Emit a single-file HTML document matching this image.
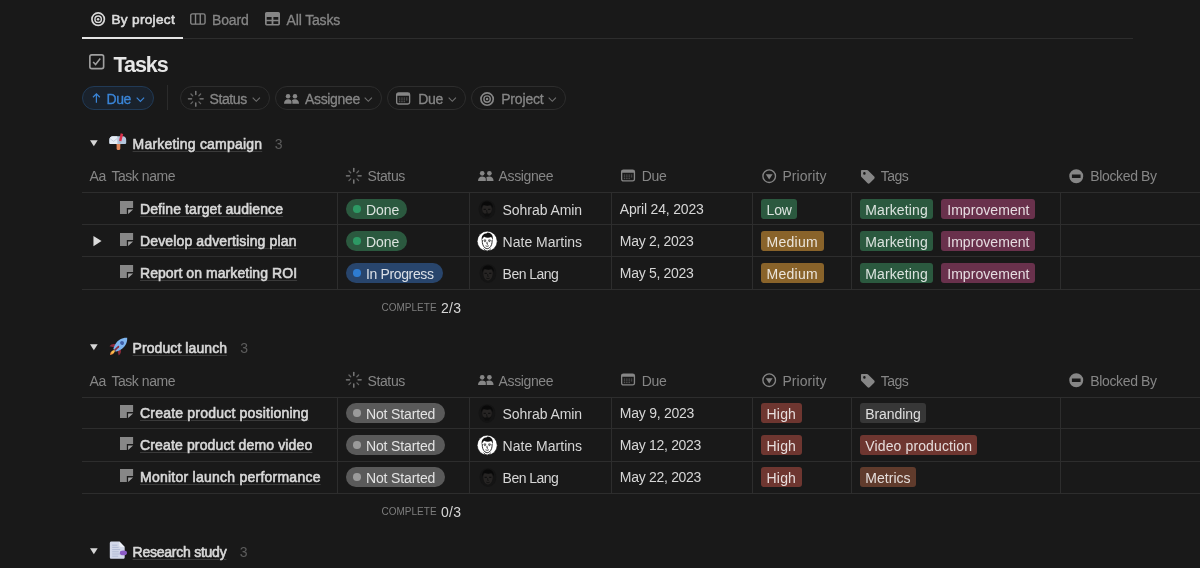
<!DOCTYPE html>
<html lang="en"><head><meta charset="utf-8"><title>Tasks</title>
<style>

html,body{margin:0;padding:0;background:#191919;}
body{width:1200px;height:568px;overflow:hidden;position:relative;font-family:"Liberation Sans",sans-serif;color:#d4d4d4;-webkit-font-smoothing:antialiased;}
.row{position:absolute;left:0;width:1200px;}
.app{position:absolute;left:0;top:0;width:1200px;height:568px;will-change:transform;}
.t{position:absolute;top:0;white-space:pre;line-height:inherit;}
.ic{position:absolute;display:block;overflow:visible;}
.vl{position:absolute;width:1px;background:#2d2d2d;}
.hl{position:absolute;height:1px;background:#2d2d2d;}
.tag{position:absolute;border-radius:3px;}
.pill{position:absolute;box-sizing:border-box;border:1px solid #2d2d2d;border-radius:12px;}
.u{text-decoration:underline;text-decoration-color:#3a3a3a;text-decoration-thickness:1px;text-underline-offset:2px;}
.dot{position:absolute;border-radius:50%;}
.m{-webkit-text-stroke:0.3px currentColor;}
.sb{-webkit-text-stroke:0.6px currentColor;}

</style></head>
<body>
<div class="app">
<div class="hl" style="left:82px;top:38px;width:1051px"></div>
<div class="hl" style="left:82px;top:37px;width:101px;height:2px;background:#e4e4e4"></div>
<div class="row tabs" style="top:1.00px;height:38px;line-height:38px"><svg class="ic" style="left:90.60px;top:10.90px" width="14.3" height="14.3" viewBox="0 0 16 16" ><circle cx="8" cy="8" r="6.950" fill="none" stroke="#d8d8d8" stroke-width="1.9"/><circle cx="8" cy="8" r="3.600" fill="none" stroke="#d8d8d8" stroke-width="1.6"/><circle cx="8" cy="8" r="1.400" fill="#d8d8d8"/></svg><span class="t sb" style="left:111.50px;font-size:13.6px;font-weight:400;color:#dcdcdc;letter-spacing:0.305px">By project</span><svg class="ic" style="left:190.20px;top:11.80px" width="15.8" height="12" viewBox="0 0 16 12" ><rect x="0.75" y="0.75" width="14.5" height="10.5" rx="1.8" fill="none" stroke="#868686" stroke-width="1.4"/><path d="M5.6 1v10M10.4 1v10" stroke="#868686" stroke-width="1.4"/></svg><span class="t m" style="left:212.10px;font-size:14px;font-weight:400;color:#868686;letter-spacing:-0.172px">Board</span><svg class="ic" style="left:265.00px;top:11.10px" width="15" height="13.4" viewBox="0 0 15 13.4" ><path fill-rule="evenodd" fill="#868686" d="M1.600 0h11.800A1.600 1.600 0 0 1 15 1.600v10.200a1.600 1.600 0 0 1-1.600 1.600H1.600A1.600 1.600 0 0 1 0 11.800V1.600A1.600 1.600 0 0 1 1.600 0zM1.700 4.900h4.900v2.900H1.700zM8.400 4.900h4.900v2.900H8.400zM1.700 9.200h4.900v2.800H1.700zM8.400 9.200h4.900v2.800H8.400z"/></svg><span class="t m" style="left:286.60px;font-size:14px;font-weight:400;color:#868686;letter-spacing:-0.165px">All Tasks</span></div>
<div class="row title" style="top:49.80px;height:30px;line-height:30px"><svg class="ic" style="left:89.00px;top:4.00px" width="15.5" height="15.5" viewBox="0 0 16 16" ><rect x="0.9" y="0.9" width="14.2" height="14.2" rx="2" fill="none" stroke="#a0a0a0" stroke-width="1.7"/><path d="M4.300 8.200l2.500 2.700l4.800-6.200" fill="none" stroke="#a0a0a0" stroke-width="1.6"/></svg><span class="t " style="left:113.40px;font-size:21.5px;font-weight:700;color:#e6e6e6;letter-spacing:-0.995px">Tasks</span></div>
<div class="row filters" style="top:86.00px;height:24px;line-height:24px"><div class="pill" style="left:82px;top:0;width:72px;height:24px;border-color:#213a56;background:#1a222c"></div><svg class="ic" style="left:92.00px;top:7.00px" width="8.8" height="10.3" viewBox="0 0 10 12" ><path d="M5 11.5V1.2M1 5l4-4l4 4" fill="none" stroke="#3a85d8" stroke-width="1.4"/></svg><span class="t m" style="left:106.50px;font-size:14px;font-weight:400;color:#3a85d8;top:1px;letter-spacing:-0.429px">Due</span><svg class="ic" style="left:135.50px;top:10.70px" width="8.8" height="5.3" viewBox="0 0 10 6" ><path d="M0.8 0.8l4.200 4.200l4.200-4.200" fill="none" stroke="#3a85d8" stroke-width="1.3"/></svg><div class="vl" style="left:167px;top:-1px;height:25px;background:#2b2b2b"></div><div class="pill" style="left:180px;top:0;width:89.5px;height:24px"></div><svg class="ic" style="left:188.00px;top:5.10px" width="15.6" height="15.6" viewBox="0 0 16 16" ><path d="M8.00 3.70L8.00 0.40" stroke="#868686" stroke-opacity="1" stroke-width="1.35" stroke-linecap="round" fill="none"/><path d="M11.18 4.82L12.95 3.05" stroke="#868686" stroke-opacity="0.7" stroke-width="1.35" stroke-linecap="round" fill="none"/><path d="M12.30 8.00L15.60 8.00" stroke="#868686" stroke-opacity="1" stroke-width="1.35" stroke-linecap="round" fill="none"/><path d="M11.18 11.18L12.95 12.95" stroke="#868686" stroke-opacity="0.7" stroke-width="1.35" stroke-linecap="round" fill="none"/><path d="M8.00 12.30L8.00 15.60" stroke="#868686" stroke-opacity="1" stroke-width="1.35" stroke-linecap="round" fill="none"/><path d="M4.82 11.18L3.05 12.95" stroke="#868686" stroke-opacity="0.7" stroke-width="1.35" stroke-linecap="round" fill="none"/><path d="M3.70 8.00L0.40 8.00" stroke="#868686" stroke-opacity="1" stroke-width="1.35" stroke-linecap="round" fill="none"/><path d="M4.82 4.82L3.05 3.05" stroke="#868686" stroke-opacity="0.7" stroke-width="1.35" stroke-linecap="round" fill="none"/></svg><span class="t m" style="left:209.50px;font-size:14px;font-weight:400;color:#868686;top:1px;letter-spacing:-0.384px">Status</span><svg class="ic" style="left:251.50px;top:10.60px" width="8.6" height="5.2" viewBox="0 0 10 6" ><path d="M0.8 0.8l4.200 4.200l4.200-4.200" fill="none" stroke="#6f6f6f" stroke-width="1.3"/></svg><div class="pill" style="left:275px;top:0;width:107px;height:24px"></div><svg class="ic" style="left:283.80px;top:7.70px" width="15" height="9.8" viewBox="0 0 16 10.4" ><circle cx="4.3" cy="2.4" r="2.4" fill="#868686"/><circle cx="11.7" cy="2.4" r="2.4" fill="#868686"/><path fill="#868686" d="M0 10.400c0-3.200 1.700-4.800 4.300-4.800c1.700 0 3 .7 3.700 2v2.800z"/><path fill="#868686" d="M8.400 6.600c.8-.6 1.900-1 3.300-1c2.600 0 4.300 1.600 4.300 4.800H8.900V8.200c0-.6-.2-1.100-.5-1.600z"/></svg><span class="t m" style="left:305.00px;font-size:14px;font-weight:400;color:#868686;top:1px;letter-spacing:-0.337px">Assignee</span><svg class="ic" style="left:364.40px;top:10.60px" width="8.6" height="5.2" viewBox="0 0 10 6" ><path d="M0.8 0.8l4.200 4.200l4.200-4.200" fill="none" stroke="#6f6f6f" stroke-width="1.3"/></svg><div class="pill" style="left:387px;top:0;width:78.5px;height:24px"></div><svg class="ic" style="left:396.20px;top:6.20px" width="14.3" height="13" viewBox="0 0 15 13" ><rect x="0.7" y="0.7" width="13.6" height="11.6" rx="1.9" fill="none" stroke="#868686" stroke-width="1.4"/><path d="M0.7 3.600V2.600a1.900 1.900 0 0 1 1.900-1.900h9.800a1.900 1.900 0 0 1 1.900 1.900v1z" fill="#868686"/><rect x="3.00" y="5.50" width="1.5" height="1.1" fill="#868686" fill-opacity="0.6"/><rect x="5.50" y="5.50" width="1.5" height="1.1" fill="#868686" fill-opacity="0.6"/><rect x="8.00" y="5.50" width="1.5" height="1.1" fill="#868686" fill-opacity="0.6"/><rect x="10.50" y="5.50" width="1.5" height="1.1" fill="#868686" fill-opacity="0.6"/><rect x="3.00" y="7.40" width="1.5" height="1.1" fill="#868686" fill-opacity="0.6"/><rect x="5.50" y="7.40" width="1.5" height="1.1" fill="#868686" fill-opacity="0.6"/><rect x="8.00" y="7.40" width="1.5" height="1.1" fill="#868686" fill-opacity="0.6"/><rect x="10.50" y="7.40" width="1.5" height="1.1" fill="#868686" fill-opacity="0.6"/><rect x="3.00" y="9.30" width="1.5" height="1.1" fill="#868686" fill-opacity="0.6"/><rect x="5.50" y="9.30" width="1.5" height="1.1" fill="#868686" fill-opacity="0.6"/><rect x="8.00" y="9.30" width="1.5" height="1.1" fill="#868686" fill-opacity="0.6"/></svg><span class="t m" style="left:418.20px;font-size:14px;font-weight:400;color:#868686;top:1px;letter-spacing:-0.263px">Due</span><svg class="ic" style="left:447.60px;top:10.60px" width="8.6" height="5.2" viewBox="0 0 10 6" ><path d="M0.8 0.8l4.200 4.200l4.200-4.200" fill="none" stroke="#6f6f6f" stroke-width="1.3"/></svg><div class="pill" style="left:471px;top:0;width:95px;height:24px"></div><svg class="ic" style="left:480.00px;top:5.60px" width="14.2" height="14.2" viewBox="0 0 16 16" ><circle cx="8" cy="8" r="6.950" fill="none" stroke="#868686" stroke-width="1.9"/><circle cx="8" cy="8" r="3.600" fill="none" stroke="#868686" stroke-width="1.6"/><circle cx="8" cy="8" r="1.400" fill="#868686"/></svg><span class="t m" style="left:501.20px;font-size:14px;font-weight:400;color:#868686;top:1px;letter-spacing:-0.168px">Project</span><svg class="ic" style="left:548.00px;top:10.60px" width="8.6" height="5.2" viewBox="0 0 10 6" ><path d="M0.8 0.8l4.200 4.200l4.200-4.200" fill="none" stroke="#6f6f6f" stroke-width="1.3"/></svg></div>
<div class="group"><div class="row grouphead" style="top:128.60px;height:30px;line-height:30px"><svg class="ic" style="left:90.10px;top:11.20px" width="7.7" height="6.5" viewBox="0 0 10 8" ><path d="M0 0h10L5 8z" fill="#d6d6d6"/></svg><svg class="ic" style="left:109.00px;top:4.90px" width="18" height="18" viewBox="0 0 18 18" ><rect x="7.600" y="10.200" width="3.700" height="6.700" rx="1.100" fill="#e0875a"/><path d="M0.400 6.700c0-2 1.500-3.400 3.300-3.400h10.200c1.900 0 3.300 1.400 3.300 3.400v3.300c0 .5-.4.900-.9.900H1.300c-.5 0-.9-.4-.9-.9z" fill="#b4c6dc"/><path d="M0.400 6.700c0-2 1.500-3.400 3.300-3.400s4.600 0 4.600 0v7.600H1.300c-.5 0-.9-.4-.9-.9z" fill="#e7edf5"/><path d="M1 5.600l3.600 2.800l3.400-2.800" fill="none" stroke="#b9c4d4" stroke-width="0.800"/><path d="M11.700 0.300l2.500 .8l-1.900 7.300l-2.300-.6z" fill="#d9304b"/><path d="M9.900 7.700l2.400 .7l-.5 1.700l-2.300-.6z" fill="#a8b8cc"/></svg><span class="t u sb" style="left:132.60px;font-size:14px;font-weight:400;color:#d8d8d8;letter-spacing:0.197px">Marketing campaign</span><span class="t " style="left:274.70px;font-size:14px;font-weight:400;color:#5c5c5c;letter-spacing:-0.197px">3</span></div><div class="row colhead" style="top:161.40px;height:30px;line-height:30px"><span class="t " style="left:89.40px;font-size:14px;font-weight:400;color:#868686;letter-spacing:-0.112px">Aa</span><span class="t " style="left:111.40px;font-size:14px;font-weight:400;color:#868686;letter-spacing:-0.445px">Task name</span><svg class="ic" style="left:346.00px;top:6.60px" width="15.6" height="15.6" viewBox="0 0 16 16" ><path d="M8.00 3.70L8.00 0.40" stroke="#868686" stroke-opacity="1" stroke-width="1.35" stroke-linecap="round" fill="none"/><path d="M11.18 4.82L12.95 3.05" stroke="#868686" stroke-opacity="0.7" stroke-width="1.35" stroke-linecap="round" fill="none"/><path d="M12.30 8.00L15.60 8.00" stroke="#868686" stroke-opacity="1" stroke-width="1.35" stroke-linecap="round" fill="none"/><path d="M11.18 11.18L12.95 12.95" stroke="#868686" stroke-opacity="0.7" stroke-width="1.35" stroke-linecap="round" fill="none"/><path d="M8.00 12.30L8.00 15.60" stroke="#868686" stroke-opacity="1" stroke-width="1.35" stroke-linecap="round" fill="none"/><path d="M4.82 11.18L3.05 12.95" stroke="#868686" stroke-opacity="0.7" stroke-width="1.35" stroke-linecap="round" fill="none"/><path d="M3.70 8.00L0.40 8.00" stroke="#868686" stroke-opacity="1" stroke-width="1.35" stroke-linecap="round" fill="none"/><path d="M4.82 4.82L3.05 3.05" stroke="#868686" stroke-opacity="0.7" stroke-width="1.35" stroke-linecap="round" fill="none"/></svg><span class="t " style="left:367.40px;font-size:14px;font-weight:400;color:#868686;letter-spacing:-0.351px">Status</span><svg class="ic" style="left:477.60px;top:9.70px" width="15.6" height="10.1" viewBox="0 0 16 10.4" ><circle cx="4.3" cy="2.4" r="2.4" fill="#868686"/><circle cx="11.7" cy="2.4" r="2.4" fill="#868686"/><path fill="#868686" d="M0 10.400c0-3.200 1.700-4.800 4.300-4.800c1.700 0 3 .7 3.700 2v2.800z"/><path fill="#868686" d="M8.400 6.600c.8-.6 1.900-1 3.300-1c2.600 0 4.300 1.600 4.300 4.800H8.900V8.200c0-.6-.2-1.100-.5-1.600z"/></svg><span class="t " style="left:498.60px;font-size:14px;font-weight:400;color:#868686;letter-spacing:-0.387px">Assignee</span><svg class="ic" style="left:620.80px;top:7.90px" width="14.1" height="13" viewBox="0 0 15 13" ><rect x="0.7" y="0.7" width="13.6" height="11.6" rx="1.9" fill="none" stroke="#868686" stroke-width="1.4"/><path d="M0.7 3.600V2.600a1.900 1.900 0 0 1 1.900-1.900h9.800a1.900 1.900 0 0 1 1.900 1.900v1z" fill="#868686"/><rect x="3.00" y="5.50" width="1.5" height="1.1" fill="#868686" fill-opacity="0.6"/><rect x="5.50" y="5.50" width="1.5" height="1.1" fill="#868686" fill-opacity="0.6"/><rect x="8.00" y="5.50" width="1.5" height="1.1" fill="#868686" fill-opacity="0.6"/><rect x="10.50" y="5.50" width="1.5" height="1.1" fill="#868686" fill-opacity="0.6"/><rect x="3.00" y="7.40" width="1.5" height="1.1" fill="#868686" fill-opacity="0.6"/><rect x="5.50" y="7.40" width="1.5" height="1.1" fill="#868686" fill-opacity="0.6"/><rect x="8.00" y="7.40" width="1.5" height="1.1" fill="#868686" fill-opacity="0.6"/><rect x="10.50" y="7.40" width="1.5" height="1.1" fill="#868686" fill-opacity="0.6"/><rect x="3.00" y="9.30" width="1.5" height="1.1" fill="#868686" fill-opacity="0.6"/><rect x="5.50" y="9.30" width="1.5" height="1.1" fill="#868686" fill-opacity="0.6"/><rect x="8.00" y="9.30" width="1.5" height="1.1" fill="#868686" fill-opacity="0.6"/></svg><span class="t " style="left:641.80px;font-size:14px;font-weight:400;color:#868686;letter-spacing:-0.296px">Due</span><svg class="ic" style="left:761.90px;top:7.50px" width="14.4" height="14.4" viewBox="0 0 16 16" ><circle cx="8" cy="8" r="7" fill="none" stroke="#868686" stroke-width="1.5"/><path d="M4.200 5.800h7.600L8 11.600z" fill="#868686"/></svg><span class="t " style="left:782.40px;font-size:14px;font-weight:400;color:#868686;letter-spacing:0.080px">Priority</span><svg class="ic" style="left:860.00px;top:7.30px" width="15.6" height="15.6" viewBox="0 0 16 16" ><path fill-rule="evenodd" fill="#868686" d="M1 1.900C1 1.400 1.400 1 1.900 1h5.300c.4 0 .8.200 1.100.5l6.300 6.300c.6.600.6 1.500 0 2.100l-4.700 4.700c-.6.600-1.500.6-2.100 0L1.500 8.300C1.200 8 1 7.600 1 7.200zM4.500 3.200a1.300 1.300 0 1 0 0 2.600a1.300 1.300 0 0 0 0-2.600z"/></svg><span class="t " style="left:880.80px;font-size:14px;font-weight:400;color:#868686;letter-spacing:-0.520px">Tags</span><svg class="ic" style="left:1068.90px;top:7.50px" width="14.5" height="14.5" viewBox="0 0 16 16" ><path fill-rule="evenodd" fill="#868686" d="M8 0.300a7.700 7.700 0 1 0 0 15.400a7.700 7.700 0 0 0 0-15.400zM3.200 6.200h9.600v3.600H3.200z"/></svg><span class="t " style="left:1090.20px;font-size:14px;font-weight:400;color:#868686;letter-spacing:-0.345px">Blocked By</span></div><div class="hl" style="left:82px;top:192px;width:1118px"></div><div class="hl" style="left:82px;top:224px;width:1118px"></div><div class="hl" style="left:82px;top:256px;width:1118px"></div><div class="hl" style="left:82px;top:289px;width:1118px"></div><div class="vl" style="left:337px;top:192px;height:97px"></div><div class="vl" style="left:469px;top:192px;height:97px"></div><div class="vl" style="left:611px;top:192px;height:97px"></div><div class="vl" style="left:752px;top:192px;height:97px"></div><div class="vl" style="left:851px;top:192px;height:97px"></div><div class="vl" style="left:1060px;top:192px;height:97px"></div><div class="row trow" style="top:194.00px;height:32px;line-height:32px"><svg class="ic" style="left:119.90px;top:7.10px" width="13.1" height="13.1" viewBox="0 0 14 14" ><path fill="#878787" d="M0 0h14v7.600H7.300V14H0z"/><path fill="#a2a2a2" d="M8.700 9h5.300l-5.300 5z"/></svg><span class="t u sb" style="left:140.00px;font-size:14px;font-weight:400;color:#d8d8d8;top:-1px;letter-spacing:0.101px">Define target audience</span><div class="tag" style="left:345.70px;top:5.00px;width:61.30px;height:20px;line-height:20px;background:#2b593f;border-radius:10px"><i class="dot" style="left:7.60px;top:6.30px;width:7.4px;height:7.4px;background:#2d9964"></i><span class="t " style="left:20.30px;font-size:14px;font-weight:400;color:rgba(255,255,255,0.83);top:1px;letter-spacing:-0.092px">Done</span></div><svg class="ic" style="left:478.40px;top:5.80px" width="18" height="19" viewBox="0 0 18 19" ><path d="M9 0.300c4.700 0 8.300 3.600 8.300 8.700c0 5.600-3.500 9.700-8.300 9.700S0.700 14.600 0.700 9C0.700 3.900 4.300 0.300 9 0.300z" fill="#141414"/><path d="M3.300 8.600C2.700 3.900 5.400 1.500 9 1.500s6.300 2.400 5.700 7.100c-.6-1.900-1.200-2.900-2-3.500c-2.300.7-5 .6-7.200-.3c-1 .7-1.700 1.900-2.200 3.800z" fill="#090909"/><path d="M4.200 8.200c0 4.200 1.700 8.300 4.800 8.300s4.800-4.100 4.800-8.300c-.5-1.300-1-2.200-1.600-2.700c-2 .6-4.400.5-6.400-.3c-.8.600-1.300 1.600-1.600 3z" fill="#262423"/><path d="M5.600 9.300h2.300M10.100 9.300h2.300" stroke="#0c0c0c" stroke-width="1"/><path d="M8.700 10v2.400h1" fill="none" stroke="#101010" stroke-width="0.700"/><path d="M4.600 11.500c.4 3.200 2 5.300 4.400 5.300s4-2.100 4.400-5.300c-.9 1.600-1.700 2.200-2.600 2.200c-.6-.6-3-.6-3.600 0c-.9 0-1.700-.6-2.600-2.200z" fill="#0e0e0e"/></svg><span class="t " style="left:502.60px;font-size:14px;font-weight:400;color:#d6d6d6;letter-spacing:-0.061px">Sohrab Amin</span><span class="t " style="left:619.80px;font-size:14px;font-weight:400;color:#d6d6d6;top:-1px;letter-spacing:-0.186px">April 24, 2023</span><div class="tag" style="left:760.70px;top:5.00px;width:36.30px;height:20px;line-height:20px;background:#2b593f;border-radius:3px"><span class="t " style="left:5.90px;font-size:14px;font-weight:400;color:rgba(255,255,255,0.83);top:1px;letter-spacing:-0.229px">Low</span></div><div class="tag" style="left:859.80px;top:5.00px;width:73.40px;height:20px;line-height:20px;background:#2b593f;border-radius:3px"><span class="t " style="left:5.50px;font-size:14px;font-weight:400;color:rgba(255,255,255,0.83);top:1px;letter-spacing:0.115px">Marketing</span></div><div class="tag" style="left:941.20px;top:5.00px;width:93.80px;height:20px;line-height:20px;background:#69314c;border-radius:3px"><span class="t " style="left:6.00px;font-size:14px;font-weight:400;color:rgba(255,255,255,0.83);top:1px;letter-spacing:0.063px">Improvement</span></div></div><div class="row trow" style="top:226.00px;height:32px;line-height:32px"><svg class="ic" style="left:93.20px;top:9.80px" width="9" height="10.2" viewBox="0 0 8 10" ><path d="M0 0v10l8-5z" fill="#dadada"/></svg><svg class="ic" style="left:119.90px;top:7.10px" width="13.1" height="13.1" viewBox="0 0 14 14" ><path fill="#878787" d="M0 0h14v7.600H7.300V14H0z"/><path fill="#a2a2a2" d="M8.700 9h5.300l-5.300 5z"/></svg><span class="t u sb" style="left:140.00px;font-size:14px;font-weight:400;color:#d8d8d8;top:-1px;letter-spacing:0.136px">Develop advertising plan</span><div class="tag" style="left:345.70px;top:5.00px;width:61.30px;height:20px;line-height:20px;background:#2b593f;border-radius:10px"><i class="dot" style="left:7.60px;top:6.30px;width:7.4px;height:7.4px;background:#2d9964"></i><span class="t " style="left:20.30px;font-size:14px;font-weight:400;color:rgba(255,255,255,0.83);top:1px;letter-spacing:-0.092px">Done</span></div><svg class="ic" style="left:477.00px;top:5.20px" width="20.4" height="20.4" viewBox="0 0 20 20" ><circle cx="10" cy="10" r="9.800" fill="#ffffff" stroke="#0c0c0c" stroke-width="0.500"/><path d="M4.700 9.400C3.900 4.800 6.300 2.300 9.600 2.200c.4-.7 1.200-.9 1.700-.4c3 .5 4.900 3 4.100 7.500c-.4-1.800-.9-2.800-1.600-3.400c-2 .9-4.700.9-6.800-.2c-1 .7-1.700 1.900-2.300 3.700z" fill="#101010"/><path d="M5.200 8.800c-.2 3.400.7 6.300 2.700 7.800c1.300 1 2.900 1 4.200 0c2-1.500 2.900-4.400 2.700-7.800" fill="none" stroke="#1a1a1a" stroke-width="0.900"/><path d="M6.500 9.200c.8-.5 1.700-.5 2.500 0M11 9.200c.8-.5 1.700-.5 2.500 0" fill="none" stroke="#141414" stroke-width="1"/><path d="M7 10.400h1.600M11.400 10.400H13" stroke="#222" stroke-width="0.800"/><path d="M9.800 10.600v2.300h1M8.400 14.500c1.100.6 2.100.6 3.200 0" fill="none" stroke="#1a1a1a" stroke-width="0.800"/><path d="M6.400 17.400c1 1.200 2.100 2 3.600 2.400c1.500-.4 2.600-1.200 3.600-2.400" fill="none" stroke="#1a1a1a" stroke-width="0.800"/></svg><span class="t " style="left:502.60px;font-size:14px;font-weight:400;color:#d6d6d6;letter-spacing:0.012px">Nate Martins</span><span class="t " style="left:619.80px;font-size:14px;font-weight:400;color:#d6d6d6;top:-1px;letter-spacing:-0.297px">May 2, 2023</span><div class="tag" style="left:760.70px;top:5.00px;width:63.00px;height:20px;line-height:20px;background:#89632a;border-radius:3px"><span class="t " style="left:5.90px;font-size:14px;font-weight:400;color:rgba(255,255,255,0.83);top:1px;letter-spacing:0.251px">Medium</span></div><div class="tag" style="left:859.80px;top:5.00px;width:73.40px;height:20px;line-height:20px;background:#2b593f;border-radius:3px"><span class="t " style="left:5.50px;font-size:14px;font-weight:400;color:rgba(255,255,255,0.83);top:1px;letter-spacing:0.115px">Marketing</span></div><div class="tag" style="left:941.20px;top:5.00px;width:93.80px;height:20px;line-height:20px;background:#69314c;border-radius:3px"><span class="t " style="left:6.00px;font-size:14px;font-weight:400;color:rgba(255,255,255,0.83);top:1px;letter-spacing:0.063px">Improvement</span></div></div><div class="row trow" style="top:258.00px;height:32px;line-height:32px"><svg class="ic" style="left:119.90px;top:7.10px" width="13.1" height="13.1" viewBox="0 0 14 14" ><path fill="#878787" d="M0 0h14v7.600H7.300V14H0z"/><path fill="#a2a2a2" d="M8.700 9h5.300l-5.300 5z"/></svg><span class="t u sb" style="left:140.00px;font-size:14px;font-weight:400;color:#d8d8d8;top:-1px;letter-spacing:0.064px">Report on marketing ROI</span><div class="tag" style="left:345.70px;top:5.00px;width:97.60px;height:20px;line-height:20px;background:#28456c;border-radius:10px"><i class="dot" style="left:7.60px;top:6.30px;width:7.4px;height:7.4px;background:#2e7cd1"></i><span class="t " style="left:20.30px;font-size:14px;font-weight:400;color:rgba(255,255,255,0.83);top:1px;letter-spacing:-0.363px">In Progress</span></div><svg class="ic" style="left:478.60px;top:6.20px" width="18" height="19" viewBox="0 0 18 19" ><path d="M9 0.300c4.700 0 8.300 3.600 8.300 8.700c0 5.600-3.500 9.700-8.300 9.700S0.700 14.600 0.700 9C0.700 3.900 4.300 0.300 9 0.300z" fill="#141414"/><path d="M3.300 8.600C2.700 3.900 5.400 1.500 9 1.500s6.300 2.400 5.700 7.100c-.6-1.900-1.200-2.900-2-3.500c-2.300.7-5 .6-7.200-.3c-1 .7-1.700 1.900-2.200 3.800z" fill="#090909"/><path d="M4.200 8.200c0 4.200 1.700 8.300 4.800 8.300s4.800-4.100 4.800-8.300c-.5-1.300-1-2.200-1.600-2.700c-2 .6-4.400.5-6.400-.3c-.8.600-1.300 1.600-1.600 3z" fill="#262423"/><path d="M5.600 9.300h2.300M10.100 9.300h2.300" stroke="#0c0c0c" stroke-width="1"/><path d="M8.700 10v2.400h1" fill="none" stroke="#101010" stroke-width="0.700"/><path d="M7.300 14.200c1.100.5 2.300.5 3.400 0" fill="none" stroke="#0e0e0e" stroke-width="0.800"/></svg><span class="t " style="left:502.60px;font-size:14px;font-weight:400;color:#d6d6d6;letter-spacing:-0.544px">Ben Lang</span><span class="t " style="left:619.80px;font-size:14px;font-weight:400;color:#d6d6d6;top:-1px;letter-spacing:-0.297px">May 5, 2023</span><div class="tag" style="left:760.70px;top:5.00px;width:63.00px;height:20px;line-height:20px;background:#89632a;border-radius:3px"><span class="t " style="left:5.90px;font-size:14px;font-weight:400;color:rgba(255,255,255,0.83);top:1px;letter-spacing:0.251px">Medium</span></div><div class="tag" style="left:859.80px;top:5.00px;width:73.40px;height:20px;line-height:20px;background:#2b593f;border-radius:3px"><span class="t " style="left:5.50px;font-size:14px;font-weight:400;color:rgba(255,255,255,0.83);top:1px;letter-spacing:0.115px">Marketing</span></div><div class="tag" style="left:941.20px;top:5.00px;width:93.80px;height:20px;line-height:20px;background:#69314c;border-radius:3px"><span class="t " style="left:6.00px;font-size:14px;font-weight:400;color:rgba(255,255,255,0.83);top:1px;letter-spacing:0.063px">Improvement</span></div></div><div class="row foot" style="top:295.50px;height:24px;line-height:24px"><span class="t " style="left:381.40px;font-size:10px;font-weight:400;color:#7d7d7d;letter-spacing:0.023px">COMPLETE</span><span class="t " style="left:440.90px;font-size:14px;font-weight:400;color:#d6d6d6;letter-spacing:0.344px">2/3</span></div></div>
<div class="group"><div class="row grouphead" style="top:332.80px;height:30px;line-height:30px"><svg class="ic" style="left:90.10px;top:11.20px" width="7.7" height="6.5" viewBox="0 0 10 8" ><path d="M0 0h10L5 8z" fill="#d6d6d6"/></svg><svg class="ic" style="left:109.10px;top:4.40px" width="19" height="19" viewBox="0 0 19 19" ><g transform="rotate(45 9.500 9.500)"><path d="M9.500 15.500c-2 1.800-2.100 3.600 0 6c2.100-2.400 2-4.200 0-6z" fill="#f08a3c"/><path d="M9.500 14.500c-1.600 1.500-1.800 3.200 0 5.200c1.800-2 1.600-3.700 0-5.200z" fill="#f7bf4d"/><path d="M5.900 10c-2.300 1.200-3.100 3-2.900 5.700l3.800-2.300zM13.100 10c2.300 1.200 3.100 3 2.900 5.700l-3.800-2.300z" fill="#8d2b3c"/><path d="M9.500 -2.800c3.900 3.600 5.100 8.200 3.800 13.200c-.5 2-1.300 3.500-2 4.600H7.700c-.7-1.100-1.500-2.600-2-4.600c-1.300-5-.1-9.600 3.800-13.200z" fill="#7fb5ef"/><path d="M9.500 2.600c-1.100 0-2 .8-2 1.900s.9 1.900 2 1.900s2-.8 2-1.900s-.9-1.900-2-1.900z" fill="#3f5fa8"/><path d="M9.500 8.800c-.5 0-.8.300-.8.800v5.400h1.600V9.600c0-.5-.3-.8-.8-.8z" fill="#8d2b3c"/></g></svg><span class="t u sb" style="left:132.60px;font-size:14px;font-weight:400;color:#d8d8d8;letter-spacing:0.078px">Product launch</span><span class="t " style="left:240.20px;font-size:14px;font-weight:400;color:#5c5c5c;letter-spacing:-0.197px">3</span></div><div class="row colhead" style="top:365.60px;height:30px;line-height:30px"><span class="t " style="left:89.40px;font-size:14px;font-weight:400;color:#868686;letter-spacing:-0.112px">Aa</span><span class="t " style="left:111.40px;font-size:14px;font-weight:400;color:#868686;letter-spacing:-0.445px">Task name</span><svg class="ic" style="left:346.00px;top:6.60px" width="15.6" height="15.6" viewBox="0 0 16 16" ><path d="M8.00 3.70L8.00 0.40" stroke="#868686" stroke-opacity="1" stroke-width="1.35" stroke-linecap="round" fill="none"/><path d="M11.18 4.82L12.95 3.05" stroke="#868686" stroke-opacity="0.7" stroke-width="1.35" stroke-linecap="round" fill="none"/><path d="M12.30 8.00L15.60 8.00" stroke="#868686" stroke-opacity="1" stroke-width="1.35" stroke-linecap="round" fill="none"/><path d="M11.18 11.18L12.95 12.95" stroke="#868686" stroke-opacity="0.7" stroke-width="1.35" stroke-linecap="round" fill="none"/><path d="M8.00 12.30L8.00 15.60" stroke="#868686" stroke-opacity="1" stroke-width="1.35" stroke-linecap="round" fill="none"/><path d="M4.82 11.18L3.05 12.95" stroke="#868686" stroke-opacity="0.7" stroke-width="1.35" stroke-linecap="round" fill="none"/><path d="M3.70 8.00L0.40 8.00" stroke="#868686" stroke-opacity="1" stroke-width="1.35" stroke-linecap="round" fill="none"/><path d="M4.82 4.82L3.05 3.05" stroke="#868686" stroke-opacity="0.7" stroke-width="1.35" stroke-linecap="round" fill="none"/></svg><span class="t " style="left:367.40px;font-size:14px;font-weight:400;color:#868686;letter-spacing:-0.351px">Status</span><svg class="ic" style="left:477.60px;top:9.70px" width="15.6" height="10.1" viewBox="0 0 16 10.4" ><circle cx="4.3" cy="2.4" r="2.4" fill="#868686"/><circle cx="11.7" cy="2.4" r="2.4" fill="#868686"/><path fill="#868686" d="M0 10.400c0-3.200 1.700-4.800 4.300-4.800c1.700 0 3 .7 3.700 2v2.800z"/><path fill="#868686" d="M8.400 6.600c.8-.6 1.900-1 3.300-1c2.600 0 4.300 1.600 4.300 4.800H8.900V8.200c0-.6-.2-1.100-.5-1.600z"/></svg><span class="t " style="left:498.60px;font-size:14px;font-weight:400;color:#868686;letter-spacing:-0.387px">Assignee</span><svg class="ic" style="left:620.80px;top:7.90px" width="14.1" height="13" viewBox="0 0 15 13" ><rect x="0.7" y="0.7" width="13.6" height="11.6" rx="1.9" fill="none" stroke="#868686" stroke-width="1.4"/><path d="M0.7 3.600V2.600a1.900 1.900 0 0 1 1.900-1.900h9.800a1.900 1.900 0 0 1 1.900 1.900v1z" fill="#868686"/><rect x="3.00" y="5.50" width="1.5" height="1.1" fill="#868686" fill-opacity="0.6"/><rect x="5.50" y="5.50" width="1.5" height="1.1" fill="#868686" fill-opacity="0.6"/><rect x="8.00" y="5.50" width="1.5" height="1.1" fill="#868686" fill-opacity="0.6"/><rect x="10.50" y="5.50" width="1.5" height="1.1" fill="#868686" fill-opacity="0.6"/><rect x="3.00" y="7.40" width="1.5" height="1.1" fill="#868686" fill-opacity="0.6"/><rect x="5.50" y="7.40" width="1.5" height="1.1" fill="#868686" fill-opacity="0.6"/><rect x="8.00" y="7.40" width="1.5" height="1.1" fill="#868686" fill-opacity="0.6"/><rect x="10.50" y="7.40" width="1.5" height="1.1" fill="#868686" fill-opacity="0.6"/><rect x="3.00" y="9.30" width="1.5" height="1.1" fill="#868686" fill-opacity="0.6"/><rect x="5.50" y="9.30" width="1.5" height="1.1" fill="#868686" fill-opacity="0.6"/><rect x="8.00" y="9.30" width="1.5" height="1.1" fill="#868686" fill-opacity="0.6"/></svg><span class="t " style="left:641.80px;font-size:14px;font-weight:400;color:#868686;letter-spacing:-0.296px">Due</span><svg class="ic" style="left:761.90px;top:7.50px" width="14.4" height="14.4" viewBox="0 0 16 16" ><circle cx="8" cy="8" r="7" fill="none" stroke="#868686" stroke-width="1.5"/><path d="M4.200 5.800h7.600L8 11.600z" fill="#868686"/></svg><span class="t " style="left:782.40px;font-size:14px;font-weight:400;color:#868686;letter-spacing:0.080px">Priority</span><svg class="ic" style="left:860.00px;top:7.30px" width="15.6" height="15.6" viewBox="0 0 16 16" ><path fill-rule="evenodd" fill="#868686" d="M1 1.900C1 1.400 1.400 1 1.900 1h5.300c.4 0 .8.200 1.100.5l6.300 6.300c.6.600.6 1.500 0 2.100l-4.700 4.700c-.6.600-1.500.6-2.100 0L1.500 8.300C1.200 8 1 7.600 1 7.200zM4.500 3.200a1.300 1.300 0 1 0 0 2.600a1.300 1.300 0 0 0 0-2.600z"/></svg><span class="t " style="left:880.80px;font-size:14px;font-weight:400;color:#868686;letter-spacing:-0.520px">Tags</span><svg class="ic" style="left:1068.90px;top:7.50px" width="14.5" height="14.5" viewBox="0 0 16 16" ><path fill-rule="evenodd" fill="#868686" d="M8 0.300a7.700 7.700 0 1 0 0 15.400a7.700 7.700 0 0 0 0-15.400zM3.200 6.200h9.600v3.600H3.200z"/></svg><span class="t " style="left:1090.20px;font-size:14px;font-weight:400;color:#868686;letter-spacing:-0.345px">Blocked By</span></div><div class="hl" style="left:82px;top:397px;width:1118px"></div><div class="hl" style="left:82px;top:428px;width:1118px"></div><div class="hl" style="left:82px;top:461px;width:1118px"></div><div class="hl" style="left:82px;top:493px;width:1118px"></div><div class="vl" style="left:337px;top:397px;height:96px"></div><div class="vl" style="left:469px;top:397px;height:96px"></div><div class="vl" style="left:611px;top:397px;height:96px"></div><div class="vl" style="left:752px;top:397px;height:96px"></div><div class="vl" style="left:851px;top:397px;height:96px"></div><div class="vl" style="left:1060px;top:397px;height:96px"></div><div class="row trow" style="top:398.00px;height:32px;line-height:32px"><svg class="ic" style="left:119.90px;top:7.10px" width="13.1" height="13.1" viewBox="0 0 14 14" ><path fill="#878787" d="M0 0h14v7.600H7.300V14H0z"/><path fill="#a2a2a2" d="M8.700 9h5.300l-5.300 5z"/></svg><span class="t u sb" style="left:140.00px;font-size:14px;font-weight:400;color:#d8d8d8;top:-1px;letter-spacing:0.206px">Create product positioning</span><div class="tag" style="left:345.70px;top:5.00px;width:99.10px;height:20px;line-height:20px;background:#5a5a5a;border-radius:10px"><i class="dot" style="left:7.60px;top:6.30px;width:7.4px;height:7.4px;background:#9b9b9b"></i><span class="t " style="left:20.30px;font-size:14px;font-weight:400;color:rgba(255,255,255,0.83);top:1px;letter-spacing:-0.148px">Not Started</span></div><svg class="ic" style="left:478.40px;top:5.80px" width="18" height="19" viewBox="0 0 18 19" ><path d="M9 0.300c4.700 0 8.300 3.600 8.300 8.700c0 5.600-3.500 9.700-8.300 9.700S0.700 14.600 0.700 9C0.700 3.900 4.300 0.300 9 0.300z" fill="#141414"/><path d="M3.300 8.600C2.700 3.900 5.400 1.500 9 1.500s6.300 2.400 5.700 7.100c-.6-1.900-1.200-2.900-2-3.500c-2.300.7-5 .6-7.200-.3c-1 .7-1.700 1.900-2.200 3.800z" fill="#090909"/><path d="M4.200 8.200c0 4.200 1.700 8.300 4.800 8.300s4.800-4.100 4.800-8.300c-.5-1.300-1-2.200-1.600-2.700c-2 .6-4.400.5-6.400-.3c-.8.600-1.300 1.600-1.600 3z" fill="#262423"/><path d="M5.600 9.300h2.300M10.100 9.300h2.300" stroke="#0c0c0c" stroke-width="1"/><path d="M8.700 10v2.400h1" fill="none" stroke="#101010" stroke-width="0.700"/><path d="M4.600 11.500c.4 3.200 2 5.300 4.400 5.300s4-2.100 4.400-5.300c-.9 1.600-1.700 2.200-2.600 2.200c-.6-.6-3-.6-3.600 0c-.9 0-1.700-.6-2.600-2.200z" fill="#0e0e0e"/></svg><span class="t " style="left:502.60px;font-size:14px;font-weight:400;color:#d6d6d6;letter-spacing:-0.061px">Sohrab Amin</span><span class="t " style="left:619.80px;font-size:14px;font-weight:400;color:#d6d6d6;top:-1px;letter-spacing:-0.251px">May 9, 2023</span><div class="tag" style="left:760.70px;top:5.00px;width:41.30px;height:20px;line-height:20px;background:#6e3630;border-radius:3px"><span class="t " style="left:5.90px;font-size:14px;font-weight:400;color:rgba(255,255,255,0.83);top:1px;letter-spacing:0.176px">High</span></div><div class="tag" style="left:859.80px;top:5.00px;width:66.20px;height:20px;line-height:20px;background:#373737;border-radius:3px"><span class="t " style="left:5.50px;font-size:14px;font-weight:400;color:rgba(255,255,255,0.83);top:1px;letter-spacing:-0.093px">Branding</span></div></div><div class="row trow" style="top:430.00px;height:32px;line-height:32px"><svg class="ic" style="left:119.90px;top:7.10px" width="13.1" height="13.1" viewBox="0 0 14 14" ><path fill="#878787" d="M0 0h14v7.600H7.300V14H0z"/><path fill="#a2a2a2" d="M8.700 9h5.300l-5.300 5z"/></svg><span class="t u sb" style="left:140.00px;font-size:14px;font-weight:400;color:#d8d8d8;top:-1px;letter-spacing:0.141px">Create product demo video</span><div class="tag" style="left:345.70px;top:5.00px;width:99.10px;height:20px;line-height:20px;background:#5a5a5a;border-radius:10px"><i class="dot" style="left:7.60px;top:6.30px;width:7.4px;height:7.4px;background:#9b9b9b"></i><span class="t " style="left:20.30px;font-size:14px;font-weight:400;color:rgba(255,255,255,0.83);top:1px;letter-spacing:-0.148px">Not Started</span></div><svg class="ic" style="left:477.00px;top:5.20px" width="20.4" height="20.4" viewBox="0 0 20 20" ><circle cx="10" cy="10" r="9.800" fill="#ffffff" stroke="#0c0c0c" stroke-width="0.500"/><path d="M4.700 9.400C3.900 4.800 6.300 2.300 9.600 2.200c.4-.7 1.200-.9 1.700-.4c3 .5 4.900 3 4.100 7.500c-.4-1.800-.9-2.800-1.600-3.400c-2 .9-4.700.9-6.800-.2c-1 .7-1.700 1.900-2.300 3.700z" fill="#101010"/><path d="M5.200 8.800c-.2 3.400.7 6.300 2.700 7.800c1.300 1 2.900 1 4.200 0c2-1.500 2.900-4.400 2.700-7.800" fill="none" stroke="#1a1a1a" stroke-width="0.900"/><path d="M6.500 9.200c.8-.5 1.700-.5 2.500 0M11 9.200c.8-.5 1.700-.5 2.500 0" fill="none" stroke="#141414" stroke-width="1"/><path d="M7 10.400h1.600M11.400 10.400H13" stroke="#222" stroke-width="0.800"/><path d="M9.800 10.600v2.300h1M8.400 14.500c1.100.6 2.100.6 3.200 0" fill="none" stroke="#1a1a1a" stroke-width="0.800"/><path d="M6.400 17.400c1 1.200 2.100 2 3.600 2.400c1.500-.4 2.600-1.200 3.600-2.400" fill="none" stroke="#1a1a1a" stroke-width="0.800"/></svg><span class="t " style="left:502.60px;font-size:14px;font-weight:400;color:#d6d6d6;letter-spacing:0.012px">Nate Martins</span><span class="t " style="left:619.80px;font-size:14px;font-weight:400;color:#d6d6d6;top:-1px;letter-spacing:-0.295px">May 12, 2023</span><div class="tag" style="left:760.70px;top:5.00px;width:41.30px;height:20px;line-height:20px;background:#6e3630;border-radius:3px"><span class="t " style="left:5.90px;font-size:14px;font-weight:400;color:rgba(255,255,255,0.83);top:1px;letter-spacing:0.176px">High</span></div><div class="tag" style="left:859.80px;top:5.00px;width:117.70px;height:20px;line-height:20px;background:#6e3630;border-radius:3px"><span class="t " style="left:5.50px;font-size:14px;font-weight:400;color:rgba(255,255,255,0.83);top:1px;letter-spacing:0.123px">Video production</span></div></div><div class="row trow" style="top:462.00px;height:32px;line-height:32px"><svg class="ic" style="left:119.90px;top:7.10px" width="13.1" height="13.1" viewBox="0 0 14 14" ><path fill="#878787" d="M0 0h14v7.600H7.300V14H0z"/><path fill="#a2a2a2" d="M8.700 9h5.300l-5.300 5z"/></svg><span class="t u sb" style="left:140.00px;font-size:14px;font-weight:400;color:#d8d8d8;top:-1px;letter-spacing:0.246px">Monitor launch performance</span><div class="tag" style="left:345.70px;top:5.00px;width:99.10px;height:20px;line-height:20px;background:#5a5a5a;border-radius:10px"><i class="dot" style="left:7.60px;top:6.30px;width:7.4px;height:7.4px;background:#9b9b9b"></i><span class="t " style="left:20.30px;font-size:14px;font-weight:400;color:rgba(255,255,255,0.83);top:1px;letter-spacing:-0.148px">Not Started</span></div><svg class="ic" style="left:478.60px;top:6.20px" width="18" height="19" viewBox="0 0 18 19" ><path d="M9 0.300c4.700 0 8.300 3.600 8.300 8.700c0 5.600-3.500 9.700-8.300 9.700S0.700 14.600 0.700 9C0.700 3.900 4.300 0.300 9 0.300z" fill="#141414"/><path d="M3.300 8.600C2.700 3.900 5.400 1.500 9 1.500s6.300 2.400 5.700 7.100c-.6-1.900-1.200-2.900-2-3.500c-2.300.7-5 .6-7.200-.3c-1 .7-1.700 1.900-2.200 3.800z" fill="#090909"/><path d="M4.200 8.200c0 4.200 1.700 8.300 4.800 8.300s4.800-4.100 4.800-8.300c-.5-1.300-1-2.200-1.600-2.700c-2 .6-4.400.5-6.400-.3c-.8.600-1.300 1.600-1.600 3z" fill="#262423"/><path d="M5.600 9.300h2.300M10.100 9.300h2.300" stroke="#0c0c0c" stroke-width="1"/><path d="M8.700 10v2.400h1" fill="none" stroke="#101010" stroke-width="0.700"/><path d="M7.300 14.200c1.100.5 2.300.5 3.400 0" fill="none" stroke="#0e0e0e" stroke-width="0.800"/></svg><span class="t " style="left:502.60px;font-size:14px;font-weight:400;color:#d6d6d6;letter-spacing:-0.544px">Ben Lang</span><span class="t " style="left:619.80px;font-size:14px;font-weight:400;color:#d6d6d6;top:-1px;letter-spacing:-0.295px">May 22, 2023</span><div class="tag" style="left:760.70px;top:5.00px;width:41.30px;height:20px;line-height:20px;background:#6e3630;border-radius:3px"><span class="t " style="left:5.90px;font-size:14px;font-weight:400;color:rgba(255,255,255,0.83);top:1px;letter-spacing:0.176px">High</span></div><div class="tag" style="left:859.80px;top:5.00px;width:56.20px;height:20px;line-height:20px;background:#603b2c;border-radius:3px"><span class="t " style="left:5.50px;font-size:14px;font-weight:400;color:rgba(255,255,255,0.83);top:1px;letter-spacing:0.025px">Metrics</span></div></div><div class="row foot" style="top:499.70px;height:24px;line-height:24px"><span class="t " style="left:381.40px;font-size:10px;font-weight:400;color:#7d7d7d;letter-spacing:0.023px">COMPLETE</span><span class="t " style="left:440.90px;font-size:14px;font-weight:400;color:#d6d6d6;letter-spacing:0.344px">0/3</span></div></div>
<div class="group"><div class="row grouphead" style="top:536.60px;height:30px;line-height:30px"><svg class="ic" style="left:90.10px;top:11.20px" width="7.7" height="6.5" viewBox="0 0 10 8" ><path d="M0 0h10L5 8z" fill="#d6d6d6"/></svg><svg class="ic" style="left:109.00px;top:4.60px" width="18" height="18" viewBox="0 0 18 18" ><path d="M0.800 2.200c0-.9.700-1.600 1.600-1.600h8l5.300 5.300v10.300c0 .9-.7 1.600-1.600 1.600H2.400c-.9 0-1.600-.7-1.600-1.600z" fill="#d3d9ea"/><path d="M10.400 0.600l5.300 5.300h-3.700c-.9 0-1.600-.7-1.600-1.600z" fill="#eef1f8"/><path d="M3.200 4.200h5.200M3.200 6.400h6.400M3.200 8.600h8M3.200 10.800h6.600M3.200 13h7.600M3.200 15.200h6" stroke="#aeb8d2" stroke-width="0.900"/><ellipse cx="14.400" cy="11.900" rx="3.600" ry="2.400" fill="#8b5bc6"/></svg><span class="t u sb" style="left:132.60px;font-size:14px;font-weight:400;color:#d8d8d8;letter-spacing:-0.249px">Research study</span><span class="t " style="left:239.70px;font-size:14px;font-weight:400;color:#5c5c5c;letter-spacing:-0.197px">3</span></div></div>
</div>
</body></html>
